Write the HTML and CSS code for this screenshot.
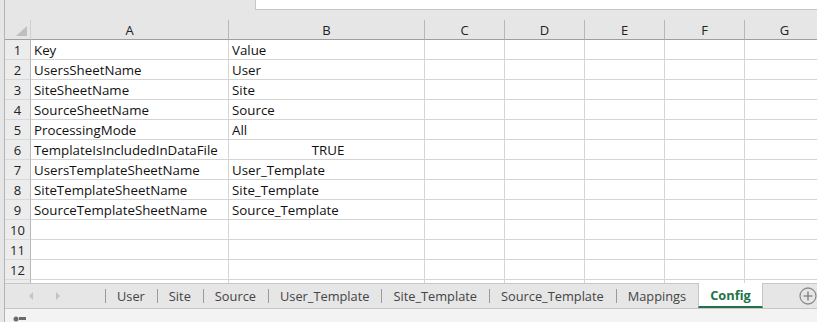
FILE: index.html
```html
<!DOCTYPE html>
<html lang="en">
<head>
  <meta charset="UTF-8" />
  <title>Config sheet</title>
  <link rel="stylesheet" href="styles.css">
</head>
<body>
  <div class="app">
    <div class="top-bar">
      <div class="formula-box"></div>
    </div>

    <div class="sheet">
      <div class="corner"><span class="corner-tri"></span></div>
      <div class="col-head">A</div>
      <div class="col-head">B</div>
      <div class="col-head">C</div>
      <div class="col-head">D</div>
      <div class="col-head">E</div>
      <div class="col-head">F</div>
      <div class="col-head">G</div>

      <div class="row-head">1</div><div class="cell">Key</div><div class="cell">Value</div><div class="cell"></div><div class="cell"></div><div class="cell"></div><div class="cell"></div><div class="cell"></div>
      <div class="row-head">2</div><div class="cell">UsersSheetName</div><div class="cell">User</div><div class="cell"></div><div class="cell"></div><div class="cell"></div><div class="cell"></div><div class="cell"></div>
      <div class="row-head">3</div><div class="cell">SiteSheetName</div><div class="cell">Site</div><div class="cell"></div><div class="cell"></div><div class="cell"></div><div class="cell"></div><div class="cell"></div>
      <div class="row-head">4</div><div class="cell">SourceSheetName</div><div class="cell">Source</div><div class="cell"></div><div class="cell"></div><div class="cell"></div><div class="cell"></div><div class="cell"></div>
      <div class="row-head">5</div><div class="cell">ProcessingMode</div><div class="cell">All</div><div class="cell"></div><div class="cell"></div><div class="cell"></div><div class="cell"></div><div class="cell"></div>
      <div class="row-head">6</div><div class="cell">TemplateIsIncludedInDataFile</div><div class="cell bool">TRUE</div><div class="cell"></div><div class="cell"></div><div class="cell"></div><div class="cell"></div><div class="cell"></div>
      <div class="row-head">7</div><div class="cell">UsersTemplateSheetName</div><div class="cell">User_Template</div><div class="cell"></div><div class="cell"></div><div class="cell"></div><div class="cell"></div><div class="cell"></div>
      <div class="row-head">8</div><div class="cell">SiteTemplateSheetName</div><div class="cell">Site_Template</div><div class="cell"></div><div class="cell"></div><div class="cell"></div><div class="cell"></div><div class="cell"></div>
      <div class="row-head">9</div><div class="cell">SourceTemplateSheetName</div><div class="cell">Source_Template</div><div class="cell"></div><div class="cell"></div><div class="cell"></div><div class="cell"></div><div class="cell"></div>
      <div class="row-head">10</div><div class="cell"></div><div class="cell"></div><div class="cell"></div><div class="cell"></div><div class="cell"></div><div class="cell"></div><div class="cell"></div>
      <div class="row-head">11</div><div class="cell"></div><div class="cell"></div><div class="cell"></div><div class="cell"></div><div class="cell"></div><div class="cell"></div><div class="cell"></div>
      <div class="row-head">12</div><div class="cell"></div><div class="cell"></div><div class="cell"></div><div class="cell"></div><div class="cell"></div><div class="cell"></div><div class="cell"></div>
      <div class="row-head cut"></div><div class="cell cut"></div><div class="cell cut"></div><div class="cell cut"></div><div class="cell cut"></div><div class="cell cut"></div><div class="cell cut"></div><div class="cell cut"></div>
    </div>

    <div class="tab-bar">
      <div class="tab-nav">
        <span class="arrow left"></span>
        <span class="arrow right"></span>
      </div>
      <div class="tab">User</div>
      <div class="tab">Site</div>
      <div class="tab">Source</div>
      <div class="tab">User_Template</div>
      <div class="tab">Site_Template</div>
      <div class="tab">Source_Template</div>
      <div class="tab">Mappings</div>
      <div class="tab active">Config</div>
      <div class="tab-add">
        <svg width="18" height="18" viewBox="0 0 18 18">
          <circle cx="9" cy="9" r="8" fill="none" stroke="#8c8c8c" stroke-width="1.3"/>
          <path d="M9 4.5v9M4.5 9h9" stroke="#8c8c8c" stroke-width="1.6"/>
        </svg>
      </div>
    </div>

    <div class="status-bar">
      <svg width="14" height="6" viewBox="0 0 14 6">
        <circle cx="3" cy="3" r="2.5" fill="#6b6b6b"/>
        <rect x="6" y="1" width="7" height="3" fill="#6b6b6b"/>
      </svg>
    </div>
  </div>
</body>
</html>
```

FILE: styles.css
```css
html, body {
  margin: 0;
  padding: 0;
  background-color: #e6e6e6;
  overflow: hidden;
}
.app {
  margin-left: 4px;
  border-left: 1px solid #b4b4b4;
  height: 322px;
  display: flex;
  flex-direction: column;
}
.top-bar {
  height: 10px;
  margin-bottom: 10px;
  display: flex;
}
.formula-box {
  margin-left: 250px;
  flex: 1;
  background-color: #fff;
  border-left: 1px solid #c6c6c6;
  border-bottom: 1px solid #c6c6c6;
}
.sheet {
  display: grid;
  grid-template-columns: 26px 198px 196px 80px 80px 80px 80px 80px;
  grid-template-rows: 20px repeat(12, 20px) 3px;
  overflow: hidden;
  font-family: "Open Sans", "Liberation Sans", sans-serif;
  font-size: 13.3px;
  color: #111;
}
.corner {
  border-right: 1px solid #d0d0d0;
  border-bottom: 1px solid #9f9f9f;
  display: flex;
  justify-content: flex-end;
  align-items: flex-end;
  padding: 0 3px 3px 0;
}
.corner-tri {
  width: 0;
  height: 0;
  border-left: 11px solid transparent;
  border-bottom: 10px solid #bfbfbf;
}
.col-head {
  border-right: 1px solid #b8b8b8;
  border-bottom: 1px solid #9f9f9f;
  display: flex;
  align-items: center;
  justify-content: center;
  padding-top: 1px;
  font-size: 13px;
  color: #222;
}
.row-head {
  background-color: #ececec;
  border-right: 1px solid #b8b8b8;
  border-bottom: 1px solid #d8d8d8;
  display: flex;
  align-items: center;
  justify-content: center;
  padding-top: 1px;
  font-size: 13px;
  color: #222;
}
.cell {
  background-color: #fff;
  border-right: 1px solid #d4d4d4;
  border-bottom: 1px solid #d4d4d4;
  display: flex;
  align-items: center;
  padding: 1px 0 0 3px;
  white-space: nowrap;
  overflow: hidden;
}
.cell.bool {
  justify-content: center;
}
.cut {
  border-bottom: none;
}
.tab-bar {
  height: 24px;
  border-top: 1px solid #c6c6c6;
  display: flex;
  align-items: stretch;
  font-family: "Open Sans", "Liberation Sans", sans-serif;
  font-size: 12.8px;
  color: #444;
}
.tab-nav {
  width: 100px;
  display: flex;
  align-items: center;
  gap: 23px;
  padding-left: 24px;
  box-sizing: border-box;
}
.arrow {
  width: 0;
  height: 0;
  border-top: 4px solid transparent;
  border-bottom: 4px solid transparent;
}
.arrow.left {
  border-right: 4px solid #c2c2c2;
}
.arrow.right {
  border-left: 4px solid #c2c2c2;
}
.tab {
  display: flex;
  align-items: center;
  padding: 0 12px;
  position: relative;
}
.tab::before {
  content: "";
  position: absolute;
  left: 0;
  top: 5px;
  bottom: 5px;
  border-left: 1px solid #9a9a9a;
}
.tab.active {
  background-color: #fff;
  color: #217346;
  font-weight: bold;
  margin-top: -1px;
  border-left: 1px solid #c6c6c6;
  border-right: 1px solid #c6c6c6;
  border-bottom: 2px solid #217346;
  padding: 0 11px;
}
.tab.active::before {
  display: none;
}
.tab-add {
  margin-left: auto;
  display: flex;
  align-items: center;
}
.status-bar {
  flex: 1;
  background-color: #f3f3f3;
  border-top: 1px solid #c6c6c6;
  display: flex;
  align-items: flex-start;
  padding: 7px 0 0 8px;
}
```
